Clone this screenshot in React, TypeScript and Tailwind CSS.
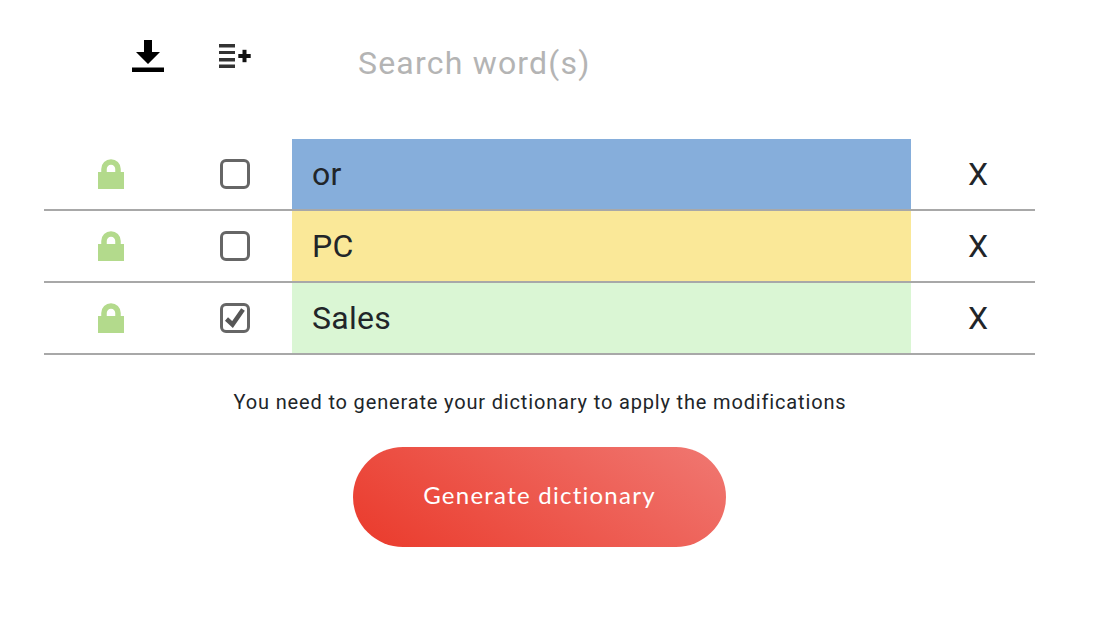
const rows = [
  { word: "or", color: "bg-[#86aedb]", checked: false },
  { word: "PC", color: "bg-[#fae898]", checked: false },
  { word: "Sales", color: "bg-[#daf6d4]", checked: true },
];

function LockIcon() {
  return (
    <svg className="blur-[0.4px]" width="26" height="30" viewBox="0 0 26 30" aria-hidden="true">
      <path d="M0 13h26v17H0z" fill="#b3da8c" />
      <path d="M6 14V10a7 7 0 0 1 14 0v4" fill="none" stroke="#b3da8c" strokeWidth="5.5" />
    </svg>
  );
}

function CheckBox({ checked }: { checked: boolean }) {
  return (
    <span className="flex h-[30px] w-[30px] items-center justify-center rounded-[6px] border-[3px] border-[#666666] bg-white">
      {checked && (
        <svg width="22" height="20" viewBox="0 0 22 20" aria-hidden="true">
          <path d="M2.500 11l6 5.500L19 1.500" fill="none" stroke="#565656" strokeWidth="4.5" />
        </svg>
      )}
    </span>
  );
}

export default function App() {
  return (
    <main className="h-[620px] w-[1110px] bg-white font-['Roboto',sans-serif] text-[#212529]">
      <header className="flex h-[139px] pl-[132px]">
        <button className="mt-[40px] h-[32px] w-[32px]" aria-label="Download">
          <svg className="blur-[0.4px]" width="32" height="32" viewBox="0 0 32 32" aria-hidden="true">
            <path d="M12 0h8v12h8L16 24 4 12h8z" fill="#000" />
            <path d="M0 27.500h32V32H0z" fill="#000" />
          </svg>
        </button>
        <button className="ml-[55px] mt-[43px] h-[26px] w-[33px]" aria-label="Add list">
          <svg className="blur-[0.6px]" width="33" height="26" viewBox="0 0 33 26" aria-hidden="true">
            <path d="M0 1h16v3.500H0zM0 8h16v3H0zM0 15h16v3.500H0zM0 21.500h16v3.500H0z" fill="#333" />
            <path d="M19.300 11h12.400v4H19.300z" fill="#111" />
            <path d="M23.500 6.800h4v12.400h-4z" fill="#111" />
          </svg>
        </button>
        <span className="ml-[106px] mt-[43px] text-[32px] leading-[40px] tracking-[1.2px] text-[#b4b4b4]">
          Search word(s)
        </span>
      </header>

      <div className="ml-[44px] w-[991px]">
        {rows.map((row) => (
          <div key={row.word} className="flex h-[72px] border-b-2 border-[#a8a8a8]">
            <div className="flex w-[134px] items-center justify-center">
              <LockIcon />
            </div>
            <div className="flex w-[114px] items-center justify-center">
              <CheckBox checked={row.checked} />
            </div>
            <div className={`flex w-[619px] items-center pl-[20px] text-[32px] tracking-[0.25px] ${row.color}`}>
              {row.word}
            </div>
            <div className="flex flex-1 items-center justify-center pl-[10px] text-[32px]">X</div>
          </div>
        ))}
      </div>

      <p className="mt-[35px] pr-[30px] text-center text-[20px] leading-[24px] tracking-[0.84px]">
        You need to generate your dictionary to apply the modifications
      </p>

      <div className="mt-[33px] pl-[353px]">
        <button className="h-[100px] w-[373px] rounded-[50px] bg-[linear-gradient(35deg,#ea3a2b,#f07872)] pb-[5px] font-['Lato',sans-serif] text-[24px] tracking-[1.25px] text-white">
          Generate dictionary
        </button>
      </div>
    </main>
  );
}
